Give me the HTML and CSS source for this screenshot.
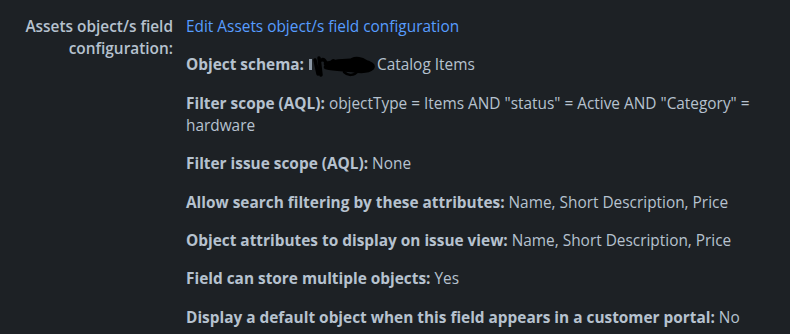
FILE: index.html
```html
<!DOCTYPE html>
<html lang="en">
<head>
    <meta charset="UTF-8">
    <meta name="viewport" content="width=device-width, initial-scale=1.0">
    <title>Assets field configuration</title>
    <link rel="stylesheet" href="styles.css">
</head>
<body>
    <div class="field-row">
        <div class="field-label">Assets object/s field configuration:</div>
        <div class="field-value">
            <a class="edit-link" href="#">Edit Assets object/s field configuration</a>
            <p><strong>Object schema:</strong> <span class="scribble"><svg width="68" height="22" viewBox="0 0 68 22"><rect x="1" y="4" width="3" height="11" fill="#8a96a3"/><path d="M7 5 L10 19 M11 3 L13 20 M14 5 C17 1 20 18 24 7 C27 2 29 16 33 8" stroke="#000" stroke-width="3.5" fill="none" stroke-linecap="round"/><path d="M18 9 C30 6 44 5 56 7 C62 8 66 10 64 13 C60 17 50 16 44 15 C36 14 26 14 18 12" stroke="#000" stroke-width="4.5" fill="#000" stroke-linecap="round"/><path d="M36 17 C40 21 46 21 50 16 M44 4 C48 2 54 3 58 6" stroke="#000" stroke-width="2.5" fill="none" stroke-linecap="round"/></svg></span>Catalog Items</p>
            <p><strong>Filter scope (AQL):</strong> objectType = Items AND "status" = Active AND "Category" = hardware</p>
            <p><strong>Filter issue scope (AQL):</strong> None</p>
            <p><strong>Allow search filtering by these attributes:</strong> Name, Short Description, Price</p>
            <p><strong>Object attributes to display on issue view:</strong> Name, Short Description, Price</p>
            <p><strong>Field can store multiple objects:</strong> Yes</p>
            <p><strong>Display a default object when this field appears in a customer portal:</strong> No</p>
        </div>
    </div>
</body>
</html>
```

FILE: styles.css
```css
body {
    margin: 0;
    padding: 15.5px 0 0 0;
    background-color: #1d2125;
    color: #b6c2cf;
    font-family: "Open Sans", "Noto Sans", sans-serif;
    font-size: 15.4px;
    line-height: 22px;
}

.field-row {
    display: grid;
    grid-template-columns: 173px 1fr;
    gap: 13px;
}

.field-label {
    text-align: right;
    font-weight: 600;
    padding-left: 10px;
}

.field-value {
    padding-right: 10px;
}

.edit-link {
    color: #579dff;
    text-decoration: none;
}

p {
    margin: 16.3px 0 0 0;
}

strong { font-weight: 700; }

.scribble {
    display: inline-block;
    vertical-align: -7px;
    margin-right: 1px;
    line-height: 0;
}
```
